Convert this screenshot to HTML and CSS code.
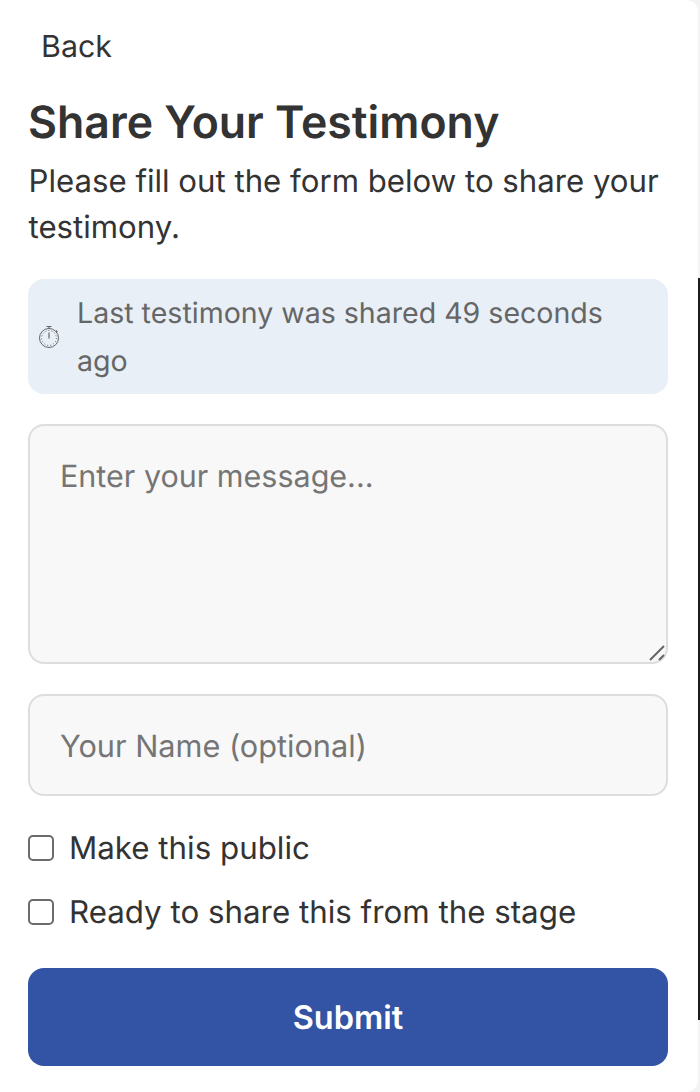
FILE: index.html
```html
<!DOCTYPE html>
<html lang="en">
<head>
    <meta charset="UTF-8">
    <meta name="viewport" content="width=device-width, initial-scale=1.0">
    <title>Share Your Testimony</title>
    <link rel="stylesheet" href="styles.css">
</head>
<body>
    <div class="edge"></div>
    <div id="outer">
        <a class="back" href="javascript:;">Back</a>
        <h1 class="title">Share Your Testimony</h1>
        <p class="intro">Please fill out the form below to share your testimony.</p>

        <div class="notice">
            <svg class="clock" viewBox="0 0 22 24" width="22" height="24" fill="none" stroke="#666" stroke-width="1">
                <circle cx="11" cy="13" r="9.500"/>
                <path d="M8.500 1.500h5M11 1.500v2M18 5.500l1.500 1.500M11 7.500v6" stroke-width="1.200"/>
                <circle cx="11" cy="13" r="7.400" stroke-dasharray="1 2.100"/>
            </svg>
            <span>Last testimony was shared 49 seconds ago</span>
        </div>

        <form class="form">
            <div class="messageWrap">
                <textarea class="field message" placeholder="Enter your message..."></textarea>
                <svg class="grip" viewBox="0 0 18 18" width="18" height="18" stroke="#666" stroke-width="2">
                    <path d="M1 16L15 2M10 16l5-5"/>
                </svg>
            </div>
            <input class="field name" type="text" placeholder="Your Name (optional)">
            <label class="check"><input type="checkbox"><span>Make this public</span></label>
            <label class="check ready"><input type="checkbox"><span>Ready to share this from the stage</span></label>
            <button class="submit" type="button">Submit</button>
        </form>
    </div>
</body>
</html>
```

FILE: styles.css
```css
*{
    margin: 0;
    padding: 0;
    box-sizing: border-box;
}

body{
    position: relative;
    height: 1092px;
    background-color: #f3f3f3;
    color: #333;
    font-family: Inter, "Liberation Sans", sans-serif;
    font-size: 30.400px;
    text-rendering: geometricPrecision;
}

/* dark line along the right side of the window */
.edge{
    position: absolute;
    top: 278px;
    right: 0;
    width: 2px;
    height: 742px;
    background-color: #1c1c1c;
}

#outer{
    width: 698px;
    height: 1092px;
    padding: 27px 30px 0 28px;
    background-color: #fff;
    border-radius: 0 12px 12px 0;
}

.back{
    display: block;
    padding-left: 13px;
    color: #333;
    text-decoration: none;
    line-height: 40px;
}

.title{
    margin-top: 23px;
    font-size: 44.600px;
    font-weight: 600;
    line-height: 64px;
}

.intro{
    margin-top: 4px;
    padding-left: 0.500px;
    line-height: 46px;
    font-size: 31.200px;
}

.notice{
    display: flex;
    align-items: center;
    gap: 17px;
    margin-top: 29px;
    padding: 10px 40px 9px 10px;
    background-color: #e8eff6;
    border-radius: 16px;
    color: #666;
    font-size: 28.550px;
    line-height: 48px;
}

.clock{
    flex: none;
}

.form{
    display: flex;
    flex-direction: column;
    margin-top: 30px;
}

.messageWrap{
    position: relative;
}

.grip{
    position: absolute;
    right: 1px;
    bottom: 2px;
}

.field{
    display: block;
    width: 100%;
    background-color: #f8f8f8;
    border: 2px solid #ddd;
    border-radius: 16px;
    font-family: inherit;
    color: #333;
    text-rendering: geometricPrecision;
}

.field::placeholder{
    color: #757575;
    opacity: 1;
}

.message{
    height: 240px;
    padding: 31px 30px 30px;
    font-size: 30.500px;
    line-height: 40px;
    resize: none;
}

.name{
    height: 102px;
    margin-top: 30px;
    padding: 2px 30px 0;
    font-size: 30.700px;
}

.check{
    display: flex;
    align-items: center;
    gap: 15px;
    margin-top: 32px;
    line-height: 40px;
    font-size: 31.300px;
}

.check.ready{
    margin-top: 24px;
}

.check input{
    appearance: none;
    flex: none;
    width: 26px;
    height: 26px;
    background-color: #fff;
    border: 2px solid #6b6b6b;
    border-radius: 5px;
}

.submit{
    height: 98px;
    margin-top: 36px;
    background-color: #3353a4;
    border: none;
    border-radius: 16px;
    color: #fff;
    font-family: inherit;
    font-size: 32.500px;
    font-weight: 600;
    text-rendering: geometricPrecision;
}
```
